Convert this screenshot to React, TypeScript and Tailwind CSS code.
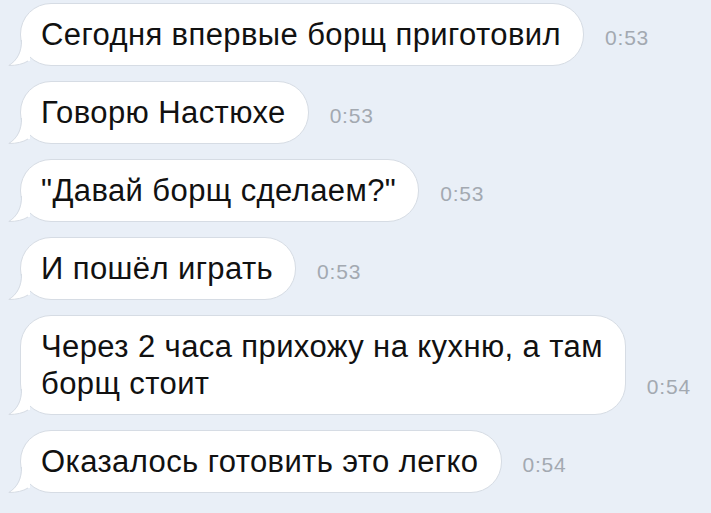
import React from "react";

type Message = {
  text: React.ReactNode;
  time: string;
};

const messages: Message[] = [
  { text: "Сегодня впервые борщ приготовил", time: "0:53" },
  { text: "Говорю Настюхе", time: "0:53" },
  { text: "\"Давай борщ сделаем?\"", time: "0:53" },
  { text: "И пошёл играть", time: "0:53" },
  {
    text: (
      <>
        Через 2 часа прихожу на кухню, а там
        <br />
        борщ стоит
      </>
    ),
    time: "0:54",
  },
  { text: "Оказалось готовить это легко", time: "0:54" },
];

// little curl at the bottom-left corner of an incoming bubble
const Tail = () => (
  <svg
    className="absolute left-[-13px] bottom-[-1px]"
    width="22"
    height="26"
    viewBox="0 0 22 26"
  >
    <path
      d="M14 0 C14 12 10 20 1 25.5 C9 25.5 15 24 20 21 L22 21 L22 0 Z"
      fill="#ffffff"
    />
    <path
      d="M13.5 0 C13.5 12 9.5 20 0.8 25.5 C9 25.5 15 24 20 21"
      fill="none"
      stroke="#d6dce4"
      strokeWidth="1"
    />
  </svg>
);

const Bubble = ({ text, time }: Message) => (
  <div className="flex items-end">
    <div className="relative rounded-[31px] border border-[#d6dce4] bg-white pl-[20px] pr-[22px] py-[12px] text-[31px] leading-[37px] tracking-[0.4px] text-[#111111]">
      <Tail />
      <span className="relative">{text}</span>
    </div>
    <span className="ml-[21px] mb-[16px] text-[21px] leading-[24px] tracking-[0.8px] text-[#a3a9b1]">
      {time}
    </span>
  </div>
);

export default function App() {
  return (
    <div
      className="w-[711px] h-[513px] overflow-hidden bg-[#e9eff7] pl-[20px] pt-[3px] flex flex-col gap-[15px]"
      style={{ fontFamily: "'Liberation Sans', Arial, sans-serif" }}
    >
      {messages.map((m, i) => (
        <Bubble key={i} text={m.text} time={m.time} />
      ))}
    </div>
  );
}
